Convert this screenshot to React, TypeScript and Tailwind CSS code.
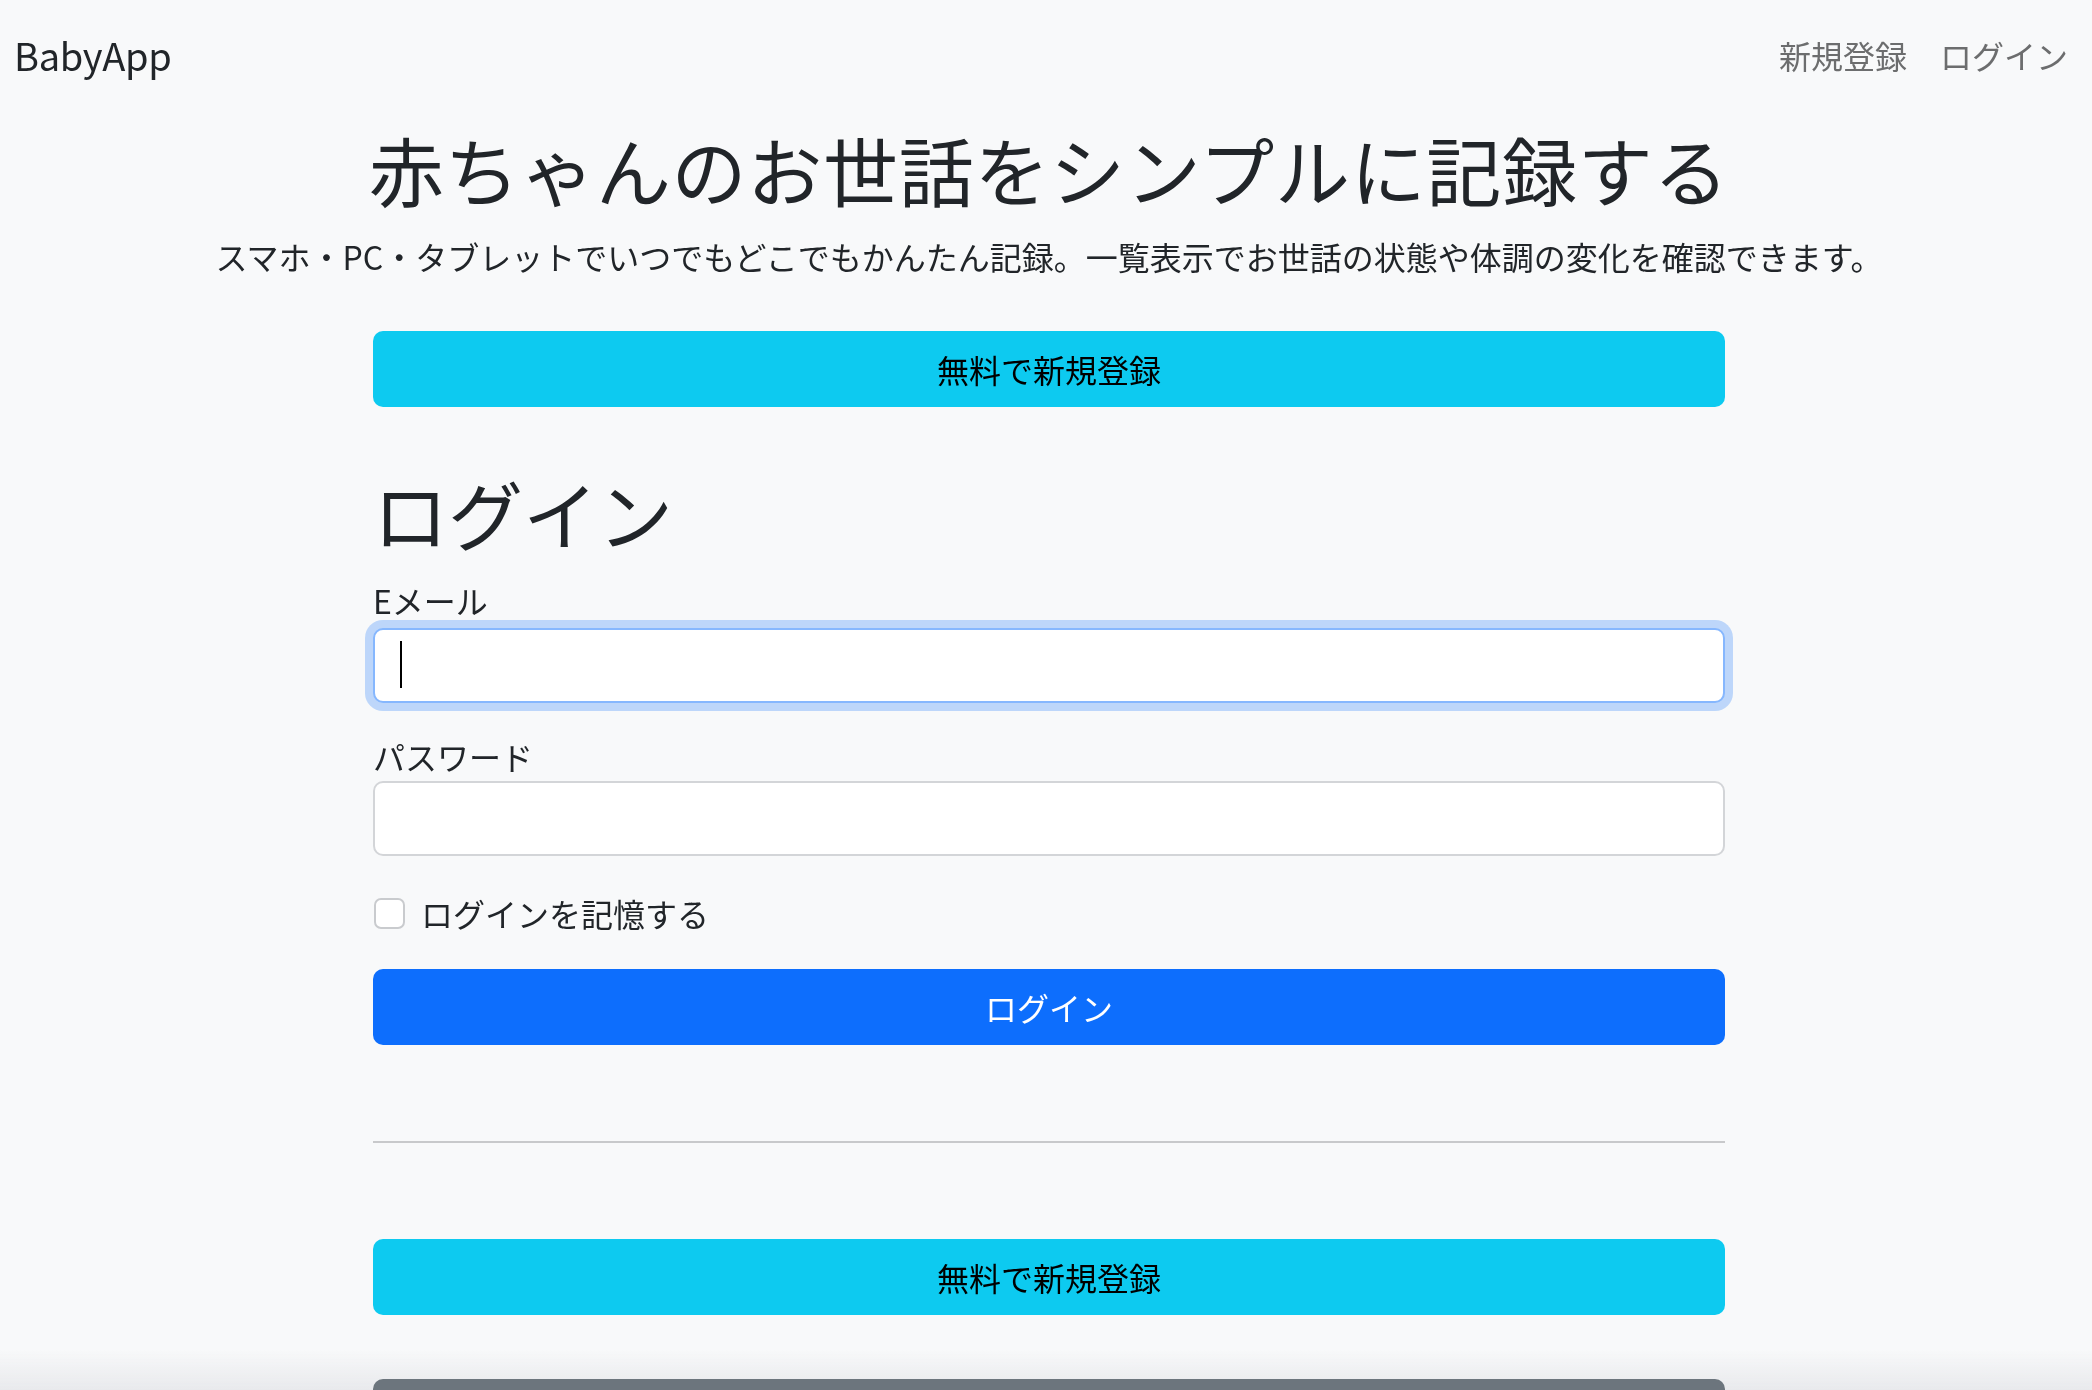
export default function App() {
  return (
    <div
      className="min-h-screen bg-[#f8f9fa] text-[#212529]"
      style={{ fontFamily: '"Noto Sans CJK JP", "Noto Sans", sans-serif' }}
    >
      <div className="pointer-events-none fixed inset-x-0 bottom-0 z-0 h-[40px] bg-linear-to-t from-[#e8e9ec] to-transparent" />

      <div className="relative z-10">
        <nav className="flex h-[110px] items-center justify-between pl-[14px] pr-[24px]">
          <a className="text-[38px] leading-[60px] tracking-[-0.3px] text-[#212529]" href="#">
            BabyApp
          </a>
          <div className="flex gap-[33px] text-[32px] leading-[48px] text-[#6c6d6e]">
            <a href="#">新規登録</a>
            <a href="#">ログイン</a>
          </div>
        </nav>

        <main className="pt-[14px] pl-[6px]">
          <h1 className="text-center text-[75px] leading-[90px] font-normal tracking-[0.7px]">
            赤ちゃんのお世話をシンプルに記録する
          </h1>
          <p className="mt-[18px] text-center text-[32px] leading-[48px]">
            スマホ・PC・タブレットでいつでもどこでもかんたん記録。一覧表示でお世話の状態や体調の変化を確認できます。
          </p>

          <div className="mx-auto w-[1352px]">
            <a
              href="#"
              className="mt-[51px] flex h-[76px] items-center justify-center rounded-[10px] bg-[#0dcaf0] text-[32px] text-black"
            >
              無料で新規登録
            </a>

            <h1 className="mt-[61px] text-[75px] leading-[90px] font-normal">ログイン</h1>

            <form className="flex flex-col">
              <label className="mt-[18px] text-[32px] leading-[48px]" htmlFor="email">
                Eメール
              </label>
              <div className="relative mt-[4px]">
                <input
                  id="email"
                  type="email"
                  className="h-[75px] w-full rounded-[10px] border-2 border-[#86b7fe] bg-white px-[24px] text-[32px] outline-none shadow-[0_0_0_8px_rgba(13,110,253,0.25)]"
                />
                <div className="pointer-events-none absolute left-[27px] top-[13px] h-[47px] w-[2px] bg-black" />
              </div>

              <label className="mt-[29px] text-[32px] leading-[48px]" htmlFor="password">
                パスワード
              </label>
              <input
                id="password"
                type="password"
                className="mt-[1px] h-[75px] w-full rounded-[10px] border-2 border-[#d3d5d8] bg-white px-[24px] text-[32px] outline-none"
              />

              <label className="mt-[33px] flex items-center gap-[16px] text-[32px] leading-[48px]">
                <input
                  type="checkbox"
                  className="ml-[1px] h-[31px] w-[31px] appearance-none rounded-[7px] border-2 border-[#c9cbce] bg-white"
                />
                ログインを記憶する
              </label>

              <button
                type="button"
                className="mt-[32px] flex h-[76px] items-center justify-center rounded-[10px] bg-[#0d6efd] text-[32px] text-white"
              >
                ログイン
              </button>
            </form>

            <hr className="mt-[96px] border-0 border-t-2 border-[#c8c9cb]" />

            <a
              href="#"
              className="mt-[96px] flex h-[76px] items-center justify-center rounded-[10px] bg-[#0dcaf0] text-[32px] text-black"
            >
              無料で新規登録
            </a>

            <a
              href="#"
              className="mt-[64px] flex h-[76px] items-center justify-center rounded-[10px] bg-[#6c757d] text-[32px] text-white"
            >
              ログイン
            </a>
            <div className="h-[80px]" />
          </div>
        </main>
      </div>
    </div>
  );
}
